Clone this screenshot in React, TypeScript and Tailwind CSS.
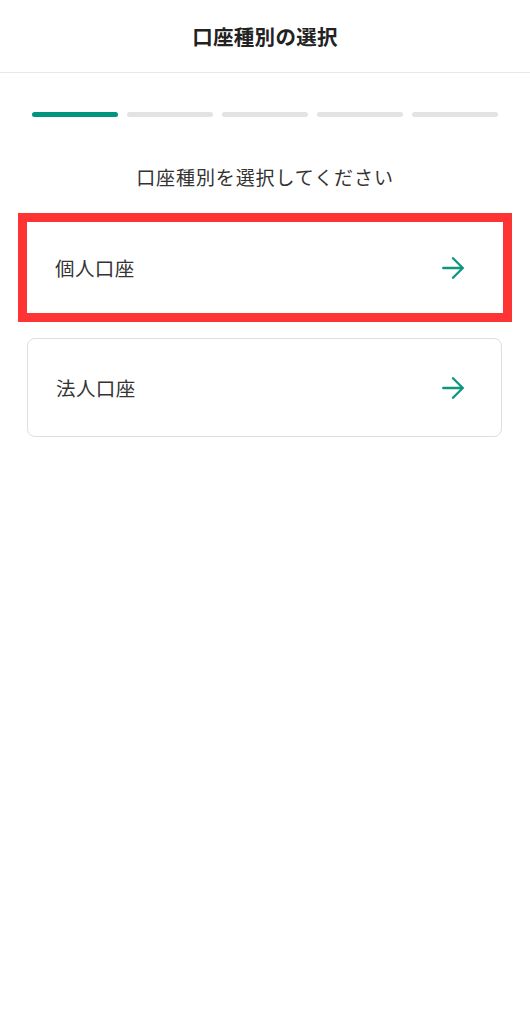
const steps = [true, false, false, false, false];

const Arrow = () => (
  <svg width="22" height="22" viewBox="0 0 22 22" fill="none" className="shrink-0">
    <path
      d="M1.2 11h19.6M11 1.2 20.8 11 11 20.8"
      stroke="#0f967f"
      strokeWidth="2.3"
      strokeLinecap="round"
      strokeLinejoin="round"
    />
  </svg>
);

const App = () => {
  return (
    <div
      className="min-h-screen bg-white text-[#333]"
      style={{ fontFamily: '"Noto Sans CJK JP", "Noto Sans", sans-serif' }}
    >
      <header className="h-[73px] flex items-center justify-center border-b border-[#e8e8e8]">
        <h1 className="text-[20.5px] font-bold text-[#222] tracking-[0.3px]">口座種別の選択</h1>
      </header>

      <div className="flex gap-[9px] px-8 mt-[39px]">
        {steps.map((done, i) => (
          <div
            key={i}
            className={`h-[5px] flex-1 rounded-full ${done ? "bg-[#00957f]" : "bg-[#e3e3e3]"}`}
          />
        ))}
      </div>

      <p className="mt-[46px] text-center text-[19px] leading-[28px] tracking-[0.9px]">
        口座種別を選択してください
      </p>

      <button className="mt-[22px] ml-[18px] w-[494px] h-[109px] border-[9px] border-[#fe3333] bg-white flex items-center justify-between pl-[28px] pr-[39px]">
        <span className="text-[19.5px] tracking-[0.4px]">個人口座</span>
        <Arrow />
      </button>

      <button className="mt-[16px] ml-[27px] w-[475px] h-[99px] border-[1.5px] border-[#dedede] rounded-lg bg-white flex items-center justify-between pl-[28px] pr-[37px]">
        <span className="text-[19.5px] tracking-[0.4px]">法人口座</span>
        <Arrow />
      </button>
    </div>
  );
};

export default App;
